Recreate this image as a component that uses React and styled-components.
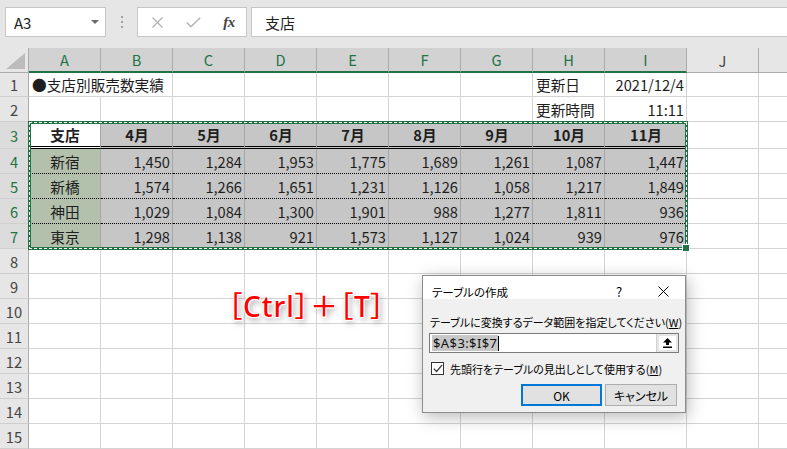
import React from "react";
import styled, { createGlobalStyle } from "styled-components";

const GlobalStyle = createGlobalStyle`
  html, body {
    margin: 0;
    padding: 0;
    background: #fff;
  }
  body {
    font-family: "Noto Sans CJK JP", "Noto Sans", sans-serif;
  }
  * {
    box-sizing: border-box;
  }
`;

const Window = styled.div`
  position: relative;
  width: 787px;
  height: 449px;
  overflow: hidden;
  background: #fff;
`;

/* ---------- formula bar ---------- */

const FormulaBar = styled.div`
  height: 48px;
  background: #e6e6e6;
  display: flex;
  align-items: flex-start;
  padding: 7px 0 0 5px;
`;

const NameBox = styled.div`
  width: 101px;
  height: 30px;
  background: #fff;
  border: 1px solid #c6c6c6;
  display: flex;
  align-items: center;
  justify-content: space-between;
  padding: 0 6px 0 8px;
  font-size: 15px;
  color: #222;
`;

const Caret = styled.span`
  width: 0;
  height: 0;
  border-left: 4px solid transparent;
  border-right: 4px solid transparent;
  border-top: 4px solid #6a6a6a;
`;

const Grip = styled.div`
  width: 31px;
  height: 30px;
  display: flex;
  flex-direction: column;
  align-items: center;
  justify-content: center;
  gap: 3px;

  span {
    width: 2px;
    height: 2px;
    background: #a0a0a0;
  }
`;

const FxBox = styled.div`
  width: 110px;
  height: 30px;
  background: #fff;
  border: 1px solid #c6c6c6;
  display: grid;
  grid-template-columns: repeat(3, 36px);
  padding-left: 1px;
  align-items: center;
  justify-items: center;
`;

const FxLabel = styled.span`
  font-family: "Liberation Serif", "DejaVu Serif", serif;
  font-style: italic;
  font-weight: 700;
  font-size: 15px;
  color: #444;
  letter-spacing: -0.5px;
`;

const FormulaInput = styled.div`
  flex: 1;
  height: 30px;
  margin-left: 4px;
  background: #fff;
  border: 1px solid #c6c6c6;
  border-right: none;
  display: flex;
  align-items: center;
  padding-left: 13px;
  font-size: 15px;
  color: #222;
`;

/* ---------- sheet ---------- */

const Sheet = styled.div`
  display: grid;
  grid-template-columns: 29px repeat(8, 72px) 82px 72px 1fr;
  grid-template-rows: 25px 24px 25px 27px repeat(12, 25px);
  font-size: 14.67px;
`;

const Corner = styled.div`
  position: relative;
  background: #e6e6e6;
  border-right: 1px solid #ababab;
  border-bottom: 1px solid #ababab;

  &::after {
    content: "";
    position: absolute;
    right: 3px;
    bottom: 3px;
    width: 19px;
    height: 16px;
    background: #bcbcbc;
    clip-path: polygon(100% 0, 100% 100%, 0 100%);
  }
`;

const ColHead = styled.div`
  display: flex;
  align-items: center;
  justify-content: center;
  background: ${(p) => (p.$sel ? "#d2d2d2" : "#e6e6e6")};
  color: ${(p) => (p.$sel ? "#217346" : "#444")};
  border-right: ${(p) => (p.$last ? "none" : "1px solid #ababab")};
  border-bottom: ${(p) => (p.$sel ? "2px solid #217346" : "1px solid #ababab")};
`;

const RowHead = styled.div`
  display: flex;
  align-items: center;
  justify-content: center;
  background: ${(p) => (p.$sel ? "#dcdcdc" : "#e6e6e6")};
  color: ${(p) => (p.$sel ? "#217346" : "#444")};
  border-right: 1px solid #ababab;
  border-bottom: 1px solid #cfcfcf;
`;

const bottoms = {
  grid: "1px solid #d4d4d4",
  double: "3px double #000",
  dotted: "1px dotted #000",
};

const justify = { left: "flex-start", center: "center", right: "flex-end" };

const Cell = styled.div`
  display: flex;
  align-items: center;
  justify-content: ${(p) => justify[p.$align || "left"]};
  grid-column: span ${(p) => p.$span || 1};
  padding: 0 2px 0 3px;
  white-space: nowrap;
  color: #1e1e1e;
  font-weight: ${(p) => (p.$bold ? 700 : 400)};
  background: ${(p) => p.$bg || "#fff"};
  border-right: ${(p) => (p.$last ? "none" : `1px solid ${p.$line || "#d4d4d4"}`)};
  border-bottom: ${(p) => bottoms[p.$bottom || "grid"]};
`;

const dashH = "repeating-linear-gradient(90deg, #fff 0 3px, transparent 3px 5px)";
const dashV = "repeating-linear-gradient(180deg, #fff 0 3px, transparent 3px 5px)";

const Marquee = styled.div`
  position: absolute;
  left: 28px;
  top: 121px;
  width: 660px;
  height: 129px;
  border: 3px solid #217346;
  pointer-events: none;

  &::before {
    content: "";
    position: absolute;
    inset: -2px;
    background: ${dashH} top / 100% 1px no-repeat,
      ${dashH} bottom / 100% 1px no-repeat,
      ${dashV} left / 1px 100% no-repeat,
      ${dashV} right / 1px 100% no-repeat;
  }

  &::after {
    content: "";
    position: absolute;
    right: -5px;
    bottom: -5px;
    width: 6px;
    height: 6px;
    background: #217346;
    border: 1px solid #fff;
  }
`;

const Shortcut = styled.div`
  position: absolute;
  left: 228px;
  top: 285px;
  font-family: "Noto Sans", "Noto Sans CJK JP", sans-serif;
  font-size: 28px;
  font-weight: 500;
  color: #ff0000;
  font-feature-settings: "palt";
  letter-spacing: 1px;
  white-space: nowrap;
  text-shadow: 1px 1px 0 #fff, -1px -1px 0 #fff, 1px -1px 0 #fff,
    -1px 1px 0 #fff, 2px 3px 6px rgba(0, 0, 0, 0.45);
`;

/* ---------- dialog ---------- */

const Dialog = styled.div`
  position: absolute;
  left: 422px;
  top: 275px;
  width: 264px;
  height: 138px;
  border: 1px solid #8c8c8c;
  background: #f0f0f0;
  box-shadow: 2px 4px 16px rgba(0, 0, 0, 0.28);
  display: flex;
  flex-direction: column;
  font-size: 11px;
  color: #000;
  font-feature-settings: "palt";
`;

const TitleBar = styled.div`
  height: 23px;
  background: #fff;
  display: flex;
  align-items: center;
  padding: 8px 0 0 9px;
  font-size: 11.5px;
`;

const Title = styled.span`
  flex: 1;
`;

const TitleButton = styled.span`
  width: 44px;
  display: flex;
  justify-content: center;
  align-items: center;
  font-size: 13px;
`;

const Body = styled.div`
  flex: 1;
  display: flex;
  flex-direction: column;
  padding: 15px 6px 6px 6px;
`;

const Label = styled.div`
  height: 16px;
  line-height: 16px;
  padding-left: 1px;
  white-space: nowrap;
  font-size: 11px;
`;

const RangeField = styled.div`
  margin-top: 3px;
  height: 20px;
  display: flex;
  background: #fff;
  border: 1px solid #7a7a7a;
`;

const RangeText = styled.div`
  flex: 1;
  display: flex;
  align-items: center;
  padding-left: 2px;
  font-family: "Noto Sans", "DejaVu Sans", sans-serif;
  font-size: 13px;
  letter-spacing: 0.4px;

  mark {
    background: #c8c8c8;
    color: #111;
    padding: 0 1px;
    line-height: 16px;
  }

  i {
    width: 1px;
    height: 15px;
    background: #000;
  }
`;

const RangeButton = styled.div`
  width: 22px;
  display: flex;
  align-items: center;
  justify-content: center;
  background: #fff;
  border-left: 1px solid #d0d0d0;
  box-shadow: inset 0 0 0 2px #e6e6e6;
`;

const CheckRow = styled.label`
  margin-top: 7px;
  height: 17px;
  display: flex;
  align-items: center;
  gap: 6px;
  padding-left: 2px;
  white-space: nowrap;
  font-size: 11px;
`;

const CheckBox = styled.span`
  width: 13px;
  height: 13px;
  border: 1px solid #333;
  background: #fff;
  display: flex;
  align-items: center;
  justify-content: center;
`;

const Buttons = styled.div`
  margin-top: 7px;
  display: flex;
  justify-content: flex-end;
  gap: 3px;
  padding-right: 2px;
`;

const Button = styled.div`
  width: ${(p) => (p.$primary ? "81px" : "72px")};
  height: 22px;
  display: flex;
  align-items: center;
  justify-content: center;
  background: #e1e1e1;
  font-size: 12px;
  border: ${(p) => (p.$primary ? "2px solid #0078d7" : "1px solid #adadad")};
`;

/* ---------- data ---------- */

const cols = ["A", "B", "C", "D", "E", "F", "G", "H", "I", "J"];
const months = ["4月", "5月", "6月", "7月", "8月", "9月", "10月", "11月"];
const branches = [
  ["新宿", ["1,450", "1,284", "1,953", "1,775", "1,689", "1,261", "1,087", "1,447"]],
  ["新橋", ["1,574", "1,266", "1,651", "1,231", "1,126", "1,058", "1,217", "1,849"]],
  ["神田", ["1,029", "1,084", "1,300", "1,901", "988", "1,277", "1,811", "936"]],
  ["東京", ["1,298", "1,138", "921", "1,573", "1,127", "1,024", "939", "976"]],
];

const SEL = "#c6c6c6";
const SEL_GREEN = "#b3c1ac";
const SEL_LINE = "#a6a6a6";

function TailCells() {
  return (
    <>
      <Cell />
      <Cell $last />
    </>
  );
}

function EmptyRow({ n }) {
  return (
    <>
      <RowHead>{n}</RowHead>
      {cols.slice(0, 9).map((c) => (
        <Cell key={c} />
      ))}
      <TailCells />
    </>
  );
}

export default function App() {
  return (
    <Window>
      <GlobalStyle />
      <FormulaBar>
        <NameBox>
          A3
          <Caret />
        </NameBox>
        <Grip>
          <span />
          <span />
          <span />
        </Grip>
        <FxBox>
          <svg width="11" height="11" viewBox="0 0 11 11">
            <path d="M0.5 0.5L10.5 10.5M10.5 0.5L0.5 10.5" stroke="#b4b4b4" strokeWidth="1.3" />
          </svg>
          <svg width="15" height="11" viewBox="0 0 15 11">
            <path d="M0.8 5.5L5 9.7L14.2 0.8" stroke="#b4b4b4" strokeWidth="1.6" fill="none" />
          </svg>
          <FxLabel>fx</FxLabel>
        </FxBox>
        <FormulaInput>支店</FormulaInput>
      </FormulaBar>

      <Sheet>
        <Corner />
        {cols.map((c) => (
          <ColHead key={c} $sel={c !== "J"}>
            {c}
          </ColHead>
        ))}
        <ColHead $last />

        <RowHead>1</RowHead>
        <Cell $span={2}>●支店別販売数実績</Cell>
        <Cell />
        <Cell />
        <Cell />
        <Cell />
        <Cell />
        <Cell>更新日</Cell>
        <Cell $align="right">2021/12/4</Cell>
        <TailCells />

        <RowHead>2</RowHead>
        {cols.slice(0, 7).map((c) => (
          <Cell key={c} />
        ))}
        <Cell>更新時間</Cell>
        <Cell $align="right">11:11</Cell>
        <TailCells />

        <RowHead $sel>3</RowHead>
        <Cell $align="center" $bold $bottom="double" $line={SEL_LINE}>
          支店
        </Cell>
        {months.map((m) => (
          <Cell key={m} $align="center" $bold $bg={SEL} $bottom="double" $line={SEL_LINE}>
            {m}
          </Cell>
        ))}
        <TailCells />

        {branches.map(([name, values], i) => {
          const bottom = i < branches.length - 1 ? "dotted" : "grid";
          return (
            <React.Fragment key={name}>
              <RowHead $sel>{i + 4}</RowHead>
              <Cell $align="center" $bg={SEL_GREEN} $bottom={bottom} $line={SEL_LINE}>
                {name}
              </Cell>
              {values.map((v, j) => (
                <Cell key={j} $align="right" $bg={SEL} $bottom={bottom} $line={SEL_LINE}>
                  {v}
                </Cell>
              ))}
              <TailCells />
            </React.Fragment>
          );
        })}

        {[8, 9, 10, 11, 12, 13, 14, 15].map((n) => (
          <EmptyRow key={n} n={n} />
        ))}
      </Sheet>

      <Marquee />

      <Shortcut>［Ctrl］＋［T］</Shortcut>

      <Dialog>
        <TitleBar>
          <Title>テーブルの作成</Title>
          <TitleButton>?</TitleButton>
          <TitleButton>
            <svg width="11" height="11" viewBox="0 0 11 11">
              <path d="M0.5 0.5L10.5 10.5M10.5 0.5L0.5 10.5" stroke="#000" strokeWidth="1" />
            </svg>
          </TitleButton>
        </TitleBar>
        <Body>
          <Label>
            テーブルに変換するデータ範囲を指定してください(<u>W</u>)
          </Label>
          <RangeField>
            <RangeText>
              <mark>$A$3:$I$7</mark>
              <i />
            </RangeText>
            <RangeButton>
              <svg width="9" height="10" viewBox="0 0 9 10">
                <path d="M4.5 0L9 4.5H6V7H3V4.5H0Z" fill="#000" />
                <rect x="0" y="8.5" width="9" height="1.5" fill="#000" />
              </svg>
            </RangeButton>
          </RangeField>
          <CheckRow>
            <CheckBox>
              <svg width="10" height="9" viewBox="0 0 10 9">
                <path d="M0.8 4.6L3.6 7.5L9.2 0.9" stroke="#333" strokeWidth="1.2" fill="none" />
              </svg>
            </CheckBox>
            <span>
              先頭行をテーブルの見出しとして使用する(<u>M</u>)
            </span>
          </CheckRow>
          <Buttons>
            <Button $primary>OK</Button>
            <Button>キャンセル</Button>
          </Buttons>
        </Body>
      </Dialog>
    </Window>
  );
}
